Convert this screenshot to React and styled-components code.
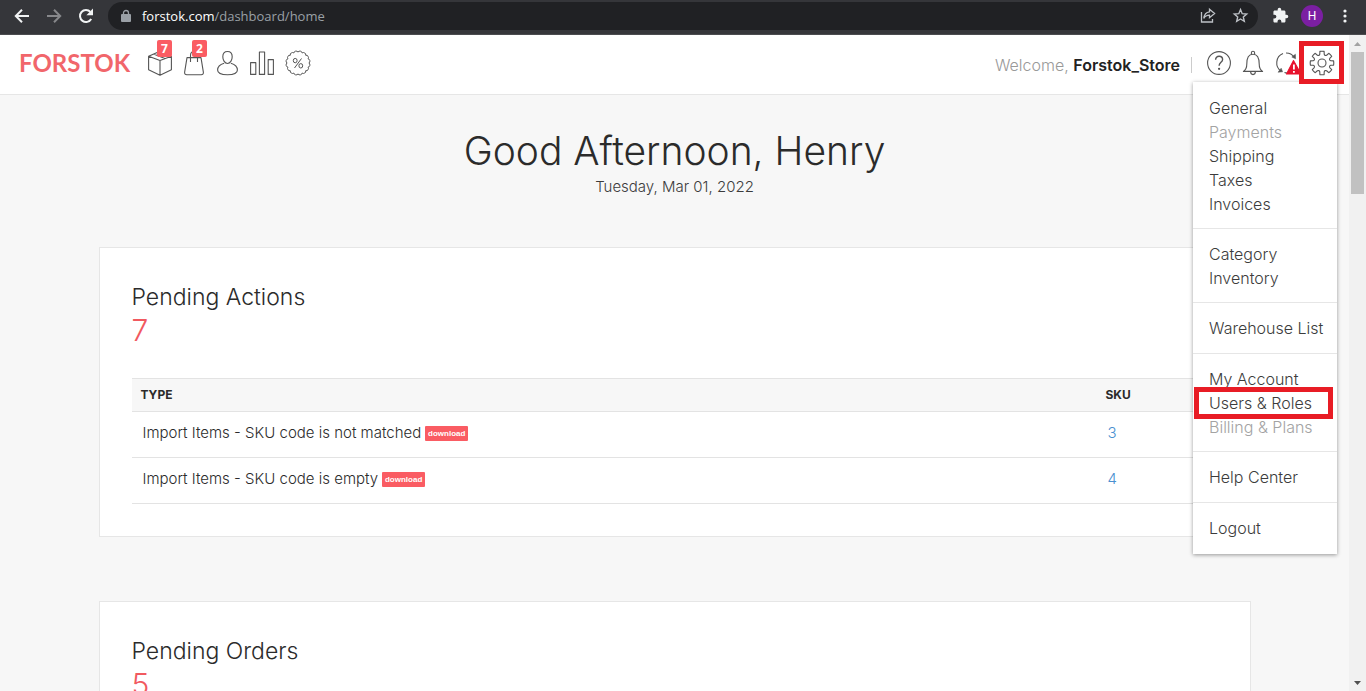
import React from 'react';
import styled, { createGlobalStyle, css } from 'styled-components';

const GlobalStyle = createGlobalStyle`
  *, *::before, *::after { box-sizing: border-box; }
  html, body, #root { height: 100%; }
  body {
    margin: 0;
    overflow: hidden;
    background: #f7f7f7;
    color: #2b2b2b;
    font-family: Inter, "Liberation Sans", sans-serif;
    font-weight: 300;
  }
  button { border: 0; padding: 0; background: none; font: inherit; color: inherit; cursor: pointer; }
  a { color: inherit; text-decoration: none; }
  h1, h2, p, ul { margin: 0; padding: 0; font-weight: 300; }
  ul { list-style: none; }
  svg { display: block; overflow: visible; }
`;

const Window = styled.div`
  display: flex;
  flex-direction: column;
  height: 100vh;
`;

/* ---------- browser bar ---------- */

const BrowserBar = styled.div`
  flex: none;
  display: flex;
  align-items: center;
  height: 35px;
  padding: 0 5px 3px 12px;
  background: #35363a;
  border-bottom: 1px solid #4b4c4f;
  color: #f1f3f4;
`;

const BarButton = styled.button`
  flex: none;
  display: grid;
  place-items: center;
  width: ${(p) => p.$width || 32}px;
  height: 28px;
  color: ${(p) => p.$color || '#f1f3f4'};
`;

const BackButton = styled(BarButton)`
  width: 20px;
  margin-right: 12px;
`;

const AddressBar = styled.div`
  flex: 1;
  display: flex;
  align-items: center;
  height: 28px;
  margin-right: 6px;
  padding: 0 2px 0 13px;
  border-radius: 14px;
  background: #202124;
  color: #9aa0a6;
`;

const AddressText = styled.div`
  flex: 1;
  padding-left: 11px;
  font: 400 13px/28px "Open Sans", "Noto Sans", sans-serif;
  color: #9aa0a6;

  b { font-weight: 400; color: #fff; }
`;

const Profile = styled.button`
  width: 22px;
  height: 22px;
  margin: 0 6px 0 5px;
  border-radius: 50%;
  background: #7b1fa2;
  color: #fff;
  font: 400 12px/22px Roboto, sans-serif;
`;

/* ---------- page frame and scroll bar ---------- */

const Viewport = styled.div`
  flex: 1;
  min-height: 0;
  display: flex;
`;

const Page = styled.div`
  flex: 1;
  min-width: 0;
  overflow: hidden;
`;

const ScrollTrack = styled.div`
  flex: none;
  display: flex;
  flex-direction: column;
  align-items: center;
  width: 17px;
  background: #f1f1f1;
`;

const ScrollThumb = styled.div`
  width: 13px;
  height: 142px;
  margin-bottom: auto;
  background: #c1c1c1;
`;

const ScrollArrow = styled.button`
  display: grid;
  place-items: center;
  width: 17px;
  height: 17px;
`;

/* ---------- header ---------- */

const Header = styled.header`
  display: flex;
  align-items: center;
  height: 60px;
  padding: 0 15px 3px 19px;
  background: #fff;
  border-bottom: 1px solid #e6e6e6;
`;

const Logo = styled.a`
  width: 129px;
  color: #f1666b;
  font: 700 24px/28px Lato, sans-serif;
`;

const Nav = styled.nav`
  display: flex;
  gap: 12px;
`;

const IconLink = styled.a`
  position: relative;
  display: block;
  color: #555;
`;

const Count = styled.span`
  position: absolute;
  top: -10px;
  right: ${(p) => p.$right || 0}px;
  width: 15px;
  height: 17px;
  border-radius: 2px;
  background: #fa5c63;
  color: #fff;
  font: 700 12px/17px "Open Sans", sans-serif;
  text-align: center;
`;

const Account = styled.div`
  display: flex;
  align-items: center;
  margin-left: auto;
`;

const Welcome = styled.p`
  padding: 3px 11px 0 0;
  font-size: 16px;
  line-height: 20px;
  color: #999;

  strong { font-weight: 600; color: #222; }
`;

const Divider = styled.span`
  width: 1px;
  height: 16px;
  margin: 3px 15px 0 0;
  background: #ccc;
`;

const Tools = styled.div`
  display: flex;
  gap: 11px;
`;

const ToolButton = styled.button`
  position: relative;
  display: block;
  color: #555;
`;

const marked = css`
  &::after {
    content: '';
    position: absolute;
    border: 5px solid #e81c25;
    pointer-events: none;
    z-index: 3;
  }
`;

const SettingsButton = styled(ToolButton)`
  ${marked}
  &::after { inset: -9px -10px -8px -11px; }
`;

/* ---------- settings menu ---------- */

const MenuAnchor = styled.div`
  position: relative;
`;

const Menu = styled.nav`
  position: absolute;
  top: 32px;
  right: -3px;
  z-index: 2;
  width: 144px;
  padding-top: 1px;
  background: #fff;
  box-shadow: 0 1px 4px rgba(0, 0, 0, 0.4);
`;

const MenuGroup = styled.ul`
  min-height: 51px;
  padding: 13px 16px 12px;
  border-bottom: 1px solid #e6e6e6;

  &:last-child { border-bottom: 0; }
`;

const MenuItem = styled.li`
  position: relative;
  font-size: 16px;
  line-height: 24px;
  white-space: nowrap;
  color: ${(p) => (p.$muted ? '#a3a3a3' : '#3c3c3c')};

  ${(p) => p.$marked && css`
    ${marked}
    &::after { inset: -4px -12px -4px -15px; }
  `}
`;

/* ---------- content ---------- */

const Content = styled.main`
  max-width: 1152px;
  margin: 0 auto;
`;

const Hero = styled.section`
  padding: 31px 0 48px;
  text-align: center;
`;

const Greeting = styled.h1`
  font-size: 39px;
  line-height: 49px;
`;

const Today = styled.p`
  font-size: 15px;
  line-height: 24px;
  color: #3c3c3c;
`;

const Card = styled.section`
  min-height: 290px;
  margin-bottom: 64px;
  padding: 33px 32px 32px;
  background: #fff;
  border: 1px solid #e6e6e6;
`;

const CardTitle = styled.h2`
  font-size: 23px;
  line-height: 32px;
`;

const CardTotal = styled.p`
  margin-bottom: 31px;
  font-size: 30px;
  line-height: 34px;
  color: #f1595f;
`;

const Table = styled.table`
  width: 100%;
  table-layout: fixed;
  border-collapse: collapse;
  text-align: left;
  border-top: 1px solid #e3e3e3;
`;

const HeadCell = styled.th`
  width: ${(p) => p.$width || 'auto'};
  height: 33px;
  padding: 0 9px 2px;
  background: #f7f7f7;
  border-bottom: 1px solid #e3e3e3;
  font-size: 12px;
  font-weight: 700;
`;

const Cell = styled.td`
  height: 46px;
  padding: 0 11px 4px;
  border-bottom: 1px solid #e3e3e3;
  font-size: 15px;
`;

const SkuLink = styled.a`
  color: #4a90d0;
`;

const Download = styled.button`
  width: 43px;
  height: 15px;
  margin-left: 4px;
  border-radius: 1px;
  background: #fa5c63;
  color: #fff;
  font: 700 8px/14px "Liberation Sans", sans-serif;
  vertical-align: middle;
`;

/* ---------- icons ---------- */

const Line = ({ w = 24, h = 26, sw = 1.1, children }) => (
  <svg width={w} height={h} viewBox={`0 0 ${w} ${h}`} fill="none" stroke="currentColor"
    strokeWidth={sw} strokeLinejoin="round" aria-hidden="true">{children}</svg>
);

const polar = (r, a, c = 12, d = 13) => `${(c + r * Math.cos(a)).toFixed(2)} ${(d + r * Math.sin(a)).toFixed(2)}`;

const gearPath = (() => {
  const step = Math.PI / 4;
  let d = '';
  for (let i = 0; i < 8; i++) {
    const a = i * step;
    d += `${i ? 'L' : 'M'}${polar(9, a - 0.25)}L${polar(11.8, a - 0.18)}A11.8 11.8 0 0 1 ${polar(11.8, a + 0.18)}L${polar(9, a + 0.25)}Q${polar(7.6, a + step / 2)} ${polar(9, a + step - 0.25)}`;
  }
  return d + 'Z';
})();

const sealPath = (() => {
  const n = 16;
  const step = (Math.PI * 2) / n;
  let d = `M${polar(10.9, 0)}`;
  for (let i = 1; i <= n; i++) {
    d += `A2.3 2.3 0 0 1 ${polar(10.9, i * step)}`;
  }
  return d + 'Z';
})();

const BoxIcon = () => (
  <Line>
    <path d="M.6 6.2 12 1.2l11.4 5v13.6L12 25.2.6 19.8zM.6 6.2 12 10.6l11.4-4.4M12 10.600v14.600M5.500 4l11.400 4.600" />
  </Line>
);
const BagIcon = () => (
  <Line w={21}>
    <path d="M3 7.600h14l2.400 14.800c.1 1.500-.7 2.300-2.200 2.300H2.800c-1.500 0-2.300-.8-2.200-2.300z" />
    <path d="M6.500 12V5.500C6.500 2.800 8 1.500 10 1.500s3.500 1.300 3.500 4V12" />
  </Line>
);
const UserIcon = () => (
  <Line w={21}>
    <path d="M10.500 1.500c-3 0-4.700 2.200-4.700 5.300 0 3.400 2 6.700 4.700 6.700s4.700-3.300 4.700-6.700c0-3.100-1.700-5.300-4.700-5.300z" />
    <path d="M7.200 13.200C3.600 14.200.6 16.600.6 20c0 3.500 4 4.700 9.900 4.700s9.900-1.200 9.900-4.700c0-3.400-3-5.800-6.600-6.800" />
  </Line>
);
const BarsIcon = () => (
  <Line>
    <path d="M.6 12.600h5.200v11.800H.6zM9.400 2h5.200v22.400H9.400zM18.200 9.600h5.200v14.800h-5.200z" />
  </Line>
);
const SealIcon = () => (
  <Line sw={1}>
    <path d={sealPath} />
    <path d="M15.500 8.500l-7 9.500" />
    <ellipse cx="9.200" cy="10.600" rx="1.900" ry="2.200" />
    <ellipse cx="14.800" cy="15.800" rx="1.900" ry="2.200" />
  </Line>
);
const HelpIcon = () => (
  <Line>
    <circle cx="12" cy="13" r="11.400" />
    <path strokeWidth="1.400" d="M8.600 9.800c0-2.200 1.400-3.600 3.500-3.600s3.500 1.300 3.500 3.200c0 2.900-3.500 3-3.500 6.400" />
    <circle cx="12.100" cy="18.800" r=".6" fill="currentColor" />
  </Line>
);
const BellIcon = () => (
  <Line w={22}>
    <path d="M1.400 21.400c2.600-1.600 3.400-3.600 3.400-7.400C4.800 7.600 6.600 4.200 11 4.200s6.200 3.400 6.200 9.800c0 3.800.8 5.800 3.400 7.400z" />
    <path d="M9.400 4.400V2.800c0-2 3.200-2 3.200 0v1.600M8.600 21.600c0 4 4.800 4 4.800 0" />
  </Line>
);
const SyncIcon = () => (
  <Line>
    <path d="M6.200 21.200A10 10 0 0 1 8 3.600M11 3a10 10 0 0 1 8.200 4M9.500 22.500c1 .4 2 .5 3 .5" />
    <path d="M7.600 21.800l-4.600.4 3.200-4zM20.600 8.800l-.2-4.600-3.600 2.800z" fill="currentColor" strokeWidth=".5" />
    <path d="M18.500 10.500 26 24H11.500z" fill="#e8112d" stroke="#e8112d" />
    <path d="M18.900 14.500v5M18.900 21v1.700" stroke="#fff" strokeWidth="1.800" />
  </Line>
);
const GearIcon = () => (
  <Line>
    <path d={gearPath} />
    <circle cx="12" cy="13" r="4" />
  </Line>
);

const Arrow = ({ flip }) => (
  <svg width="14" height="14" viewBox="0 0 14 14" fill="none" stroke="currentColor" strokeWidth="2" aria-hidden="true">
    <path d={flip ? 'M0 7h13M7 .8 13.200 7 7 13.200' : 'M14 7H1M7 .8.8 7 7 13.200'} />
  </svg>
);

/* ---------- data ---------- */

const menuGroups = [
  [['General'], ['Payments', 'muted'], ['Shipping'], ['Taxes'], ['Invoices']],
  [['Category'], ['Inventory']],
  [['Warehouse List']],
  [['My Account'], ['Users & Roles', 'marked'], ['Billing & Plans', 'muted']],
  [['Help Center']],
  [['Logout']],
];

const pendingActions = [
  { type: 'Import Items - SKU code is not matched', sku: 3 },
  { type: 'Import Items - SKU code is empty', sku: 4 },
];

export default function App() {
  return (
    <Window>
      <GlobalStyle />
      <BrowserBar>
        <BackButton aria-label="Back"><Arrow /></BackButton>
        <BarButton $width={20} $color="#87888b" aria-label="Forward"><Arrow flip /></BarButton>
        <BarButton $width={44} aria-label="Reload">
          <svg width="16" height="16" viewBox="0 0 16 16" aria-hidden="true">
            <path d="M13.200 11A6 6 0 1 1 12.400 3.900" fill="none" stroke="currentColor" strokeWidth="2" />
            <path d="M15 .6v6.600H8.400z" fill="currentColor" />
          </svg>
        </BarButton>
        <AddressBar>
          <svg width="10" height="12" viewBox="0 0 10 12" aria-hidden="true">
            <rect y="4" width="10" height="8" rx="1" fill="currentColor" />
            <path d="M2.500 5V3a2.500 2.500 0 0 1 5 0v2" fill="none" stroke="currentColor" strokeWidth="1.300" />
          </svg>
          <AddressText role="textbox" aria-label="Address" tabIndex={0}><b>forstok.com</b>/dashboard/home</AddressText>
          <BarButton $color="#bdc1c6" aria-label="Share">
            <svg width="16" height="15" viewBox="0 0 16 15" fill="none" stroke="currentColor" strokeWidth="1.300" aria-hidden="true">
              <path d="M1.500 4v10h11v-3" />
              <path d="M9.500 1.200 14.600 5.500 9.500 9.700V7.200C6.700 7.200 5 8.200 3.800 10.400 4.200 6.800 6 4.200 9.500 3.800z" />
            </svg>
          </BarButton>
          <BarButton $color="#bdc1c6" aria-label="Bookmark">
            <svg width="15" height="15" viewBox="0 0 15 15" fill="none" stroke="currentColor" strokeWidth="1.400" aria-hidden="true">
              <path d="M7.500 1.600 9.200 5.700l4.500.4-3.400 2.900 1 4.300-3.800-2.300-3.800 2.300 1-4.300L1.300 6.100l4.500-.4z" />
            </svg>
          </BarButton>
        </AddressBar>
        <BarButton aria-label="Extensions">
          <svg width="17" height="17" viewBox="0 0 24 24" fill="currentColor" aria-hidden="true">
            <path d="M20.500 11H19V7c0-1.100-.9-2-2-2h-4V3.500a2.500 2.500 0 0 0-5 0V5H4c-1.100 0-2 .9-2 2v3.800h1.500a2.700 2.700 0 0 1 0 5.400H2V20c0 1.100.9 2 2 2h3.800v-1.500a2.700 2.700 0 0 1 5.400 0V22H17c1.100 0 2-.9 2-2v-4h1.500a2.500 2.500 0 0 0 0-5z" />
          </svg>
        </BarButton>
        <Profile aria-label="Profile">H</Profile>
        <BarButton aria-label="More">
          <svg width="4" height="14" viewBox="0 0 4 14" fill="currentColor" aria-hidden="true">
            <circle cx="2" cy="2" r="1.600" /><circle cx="2" cy="7" r="1.600" /><circle cx="2" cy="12" r="1.600" />
          </svg>
        </BarButton>
      </BrowserBar>

      <Viewport>
        <Page>
          <Header>
            <Logo href="#home">FORSTOK</Logo>
            <Nav aria-label="Main">
              <IconLink href="#products" aria-label="Products"><BoxIcon /><Count>7</Count></IconLink>
              <IconLink href="#orders" aria-label="Orders"><BagIcon /><Count $right={-2}>2</Count></IconLink>
              <IconLink href="#customers" aria-label="Customers"><UserIcon /></IconLink>
              <IconLink href="#reports" aria-label="Reports"><BarsIcon /></IconLink>
              <IconLink href="#promotions" aria-label="Promotions"><SealIcon /></IconLink>
            </Nav>
            <Account>
              <Welcome>Welcome, <strong>Forstok_Store</strong></Welcome>
              <Divider />
              <Tools>
                <ToolButton aria-label="Help"><HelpIcon /></ToolButton>
                <ToolButton aria-label="Notifications"><BellIcon /></ToolButton>
                <ToolButton aria-label="Sync status"><SyncIcon /></ToolButton>
                <MenuAnchor>
                  <SettingsButton aria-label="Settings"><GearIcon /></SettingsButton>
                  <Menu aria-label="Settings">
                    {menuGroups.map((group, i) => (
                      <MenuGroup key={i}>
                        {group.map(([label, kind]) => (
                          <MenuItem key={label} $muted={kind === 'muted'} $marked={kind === 'marked'}>
                            <a href="#settings">{label}</a>
                          </MenuItem>
                        ))}
                      </MenuGroup>
                    ))}
                  </Menu>
                </MenuAnchor>
              </Tools>
            </Account>
          </Header>

          <Content>
            <Hero>
              <Greeting>Good Afternoon, Henry</Greeting>
              <Today>Tuesday, Mar 01, 2022</Today>
            </Hero>
            <Card>
              <CardTitle>Pending Actions</CardTitle>
              <CardTotal>7</CardTotal>
              <Table>
                <thead>
                  <tr>
                    <HeadCell>TYPE</HeadCell>
                    <HeadCell $width="121px">SKU</HeadCell>
                  </tr>
                </thead>
                <tbody>
                  {pendingActions.map((row) => (
                    <tr key={row.type}>
                      <Cell>{row.type}<Download>download</Download></Cell>
                      <Cell><SkuLink href="#sku">{row.sku}</SkuLink></Cell>
                    </tr>
                  ))}
                </tbody>
              </Table>
            </Card>
            <Card>
              <CardTitle>Pending Orders</CardTitle>
              <CardTotal>5</CardTotal>
            </Card>
          </Content>
        </Page>
        <ScrollTrack>
          <ScrollArrow aria-label="Scroll up">
            <svg width="7" height="4" viewBox="0 0 7 4" aria-hidden="true"><path d="M0 4 3.500 0 7 4z" fill="#a3a3a3" /></svg>
          </ScrollArrow>
          <ScrollThumb />
          <ScrollArrow aria-label="Scroll down">
            <svg width="7" height="4" viewBox="0 0 7 4" aria-hidden="true"><path d="M0 0h7L3.500 4z" fill="#505050" /></svg>
          </ScrollArrow>
        </ScrollTrack>
      </Viewport>
    </Window>
  );
}
